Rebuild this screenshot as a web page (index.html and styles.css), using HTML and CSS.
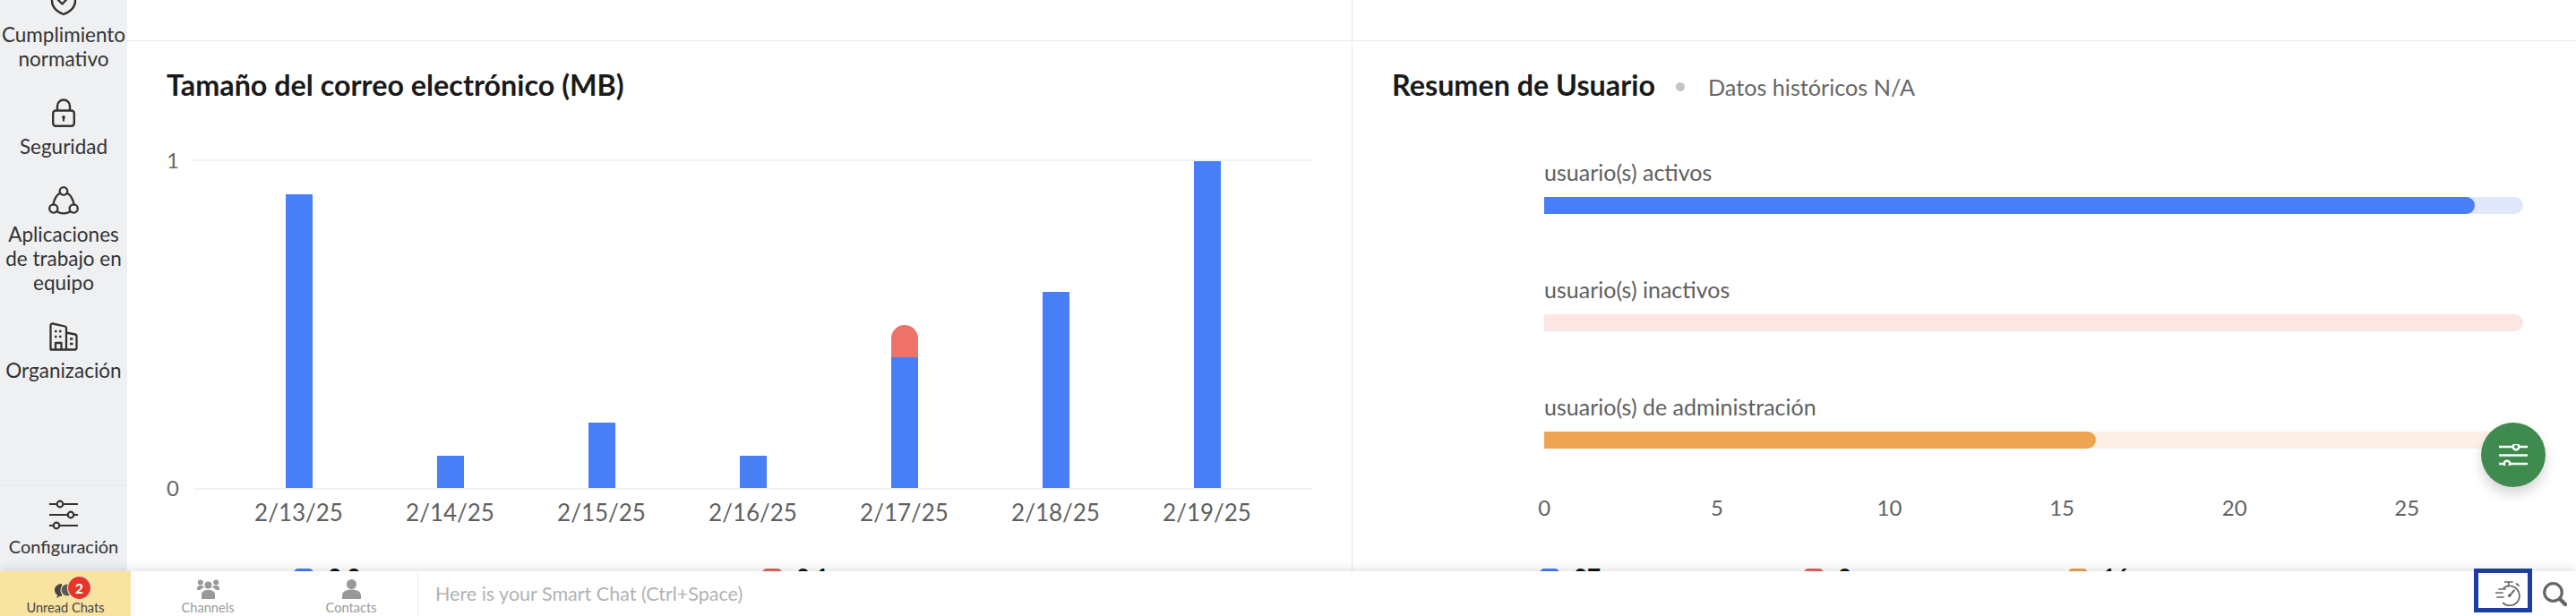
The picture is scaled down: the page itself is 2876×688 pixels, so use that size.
FILE: index.html
```html
<!DOCTYPE html>
<html lang="es">
<head>
<meta charset="utf-8">
<title>Resumen</title>
<link rel="stylesheet" href="styles.css">
</head>
<body>
<div class="app">
  <div class="main">
    <aside class="sidebar">
      <nav class="nav">
        <a class="nav-item">
          <svg class="nav-icon" viewBox="0 0 32 32" fill="none" stroke="#333" stroke-width="2.4" stroke-linecap="round" stroke-linejoin="round"><path d="M16 1.5 29 5.5V16c0 7-5.500 12-13 15C8.500 28 3 23 3 16V5.500Z"/><path d="m10 15 4.500 4.500L22 11.500"/></svg>
          <span>Cumplimiento normativo</span>
        </a>
        <a class="nav-item">
          <svg class="nav-icon" viewBox="0 0 32 32" fill="none" stroke="#333" stroke-width="2.4" stroke-linejoin="round"><rect x="4.200" y="13.500" width="23.600" height="17.300" rx="3"/><path d="M9 13.500V8.500a7 7 0 0 1 14 0v5"/><circle cx="16" cy="21" r="1.900" fill="#333" stroke="none"/><path d="M16 21v4.500" stroke-width="2"/></svg>
          <span>Seguridad</span>
        </a>
        <a class="nav-item">
          <svg class="nav-icon nav-icon-wide" viewBox="0 0 34 32" fill="none" stroke="#333" stroke-width="2.300" stroke-linecap="round"><circle cx="17" cy="5.500" r="4.300"/><circle cx="5.800" cy="25" r="4.600"/><circle cx="28.200" cy="25" r="4.600"/><path d="M13.200 7.500C9 10 6.500 14.500 5.500 20.300M20.800 7.500C25 10 27.500 14.500 28.500 20.300M10 28.500c4 2.500 10 2.500 14 0"/></svg>
          <span>Aplicaciones de trabajo en equipo</span>
        </a>
        <a class="nav-item">
          <svg class="nav-icon" viewBox="0 0 32 32" fill="none" stroke="#333" stroke-width="2.300" stroke-linejoin="round"><path d="M1.500 30.500V3.500c0-1.500 1-2.300 2.500-2L17.500 4.500c1 .2 1.500 1 1.500 2v24zM19 11.500l10 2c1 .2 1.500 1 1.500 2v13c0 1.200-.8 2-2 2H3.500c-1.200 0-2-.8-2-2"/><path d="M7 30.500v-7.500h6.500v7.500"/><path d="M6 10h2.500M11 10h2.500M6 16h2.500M11 16h2.500M23 18.500h3.500M23 24h3.500" stroke-width="2.400"/></svg>
          <span>Organización</span>
        </a>
      </nav>
      <a class="nav-footer">
        <svg class="nav-icon" viewBox="0 0 32 32" fill="none" stroke="#333" stroke-width="2.200"><path d="M0 4h8.500M15.500 4H32M0 16h20.500M27.500 16H32M0 28h4.500M11.500 28H32"/><circle cx="12" cy="4" r="3.300"/><circle cx="24" cy="16" r="3.300"/><circle cx="8" cy="28" r="3.300"/></svg>
        <span>Configuración</span>
      </a>
    </aside>

    <div class="content">
      <section class="panel panel-left">
        <div class="panel-top"></div>
        <div class="panel-body">
          <h2 class="panel-title">Tamaño del correo electrónico (MB)</h2>
          <div class="chart">
            <div class="y-axis"><span>1</span><span>0</span></div>
            <div class="plot-wrap">
              <div class="plot">
                <div class="col"><div class="bar bar-blue" style="height:90%"></div></div>
                <div class="col"><div class="bar bar-blue" style="height:10%"></div></div>
                <div class="col"><div class="bar bar-blue" style="height:20%"></div></div>
                <div class="col"><div class="bar bar-blue" style="height:10%"></div></div>
                <div class="col"><div class="bar bar-red" style="height:10%"></div><div class="bar bar-blue" style="height:40%"></div></div>
                <div class="col"><div class="bar bar-blue" style="height:60%"></div></div>
                <div class="col"><div class="bar bar-blue" style="height:100%"></div></div>
              </div>
              <div class="x-axis">
                <span>2/13/25</span><span>2/14/25</span><span>2/15/25</span><span>2/16/25</span><span>2/17/25</span><span>2/18/25</span><span>2/19/25</span>
              </div>
            </div>
          </div>
          <div class="legend legend-left">
            <div class="legend-item"><i class="swatch swatch-blue"></i><b>3.3</b></div>
            <div class="legend-item"><i class="swatch swatch-red"></i><b>0.1</b></div>
          </div>
        </div>
      </section>

      <section class="panel panel-right">
        <div class="panel-top"></div>
        <div class="panel-body">
          <div class="title-row">
            <h2 class="panel-title">Resumen de Usuario</h2>
            <i class="title-dot"></i>
            <span class="title-note">Datos históricos N/A</span>
          </div>
          <div class="hbars">
            <div class="hbar-row">
              <div class="hbar-label">usuario(s) activos</div>
              <div class="track track-blue"><div class="fill fill-blue" style="width:95.100%"></div></div>
            </div>
            <div class="hbar-row">
              <div class="hbar-label">usuario(s) inactivos</div>
              <div class="track track-red"></div>
            </div>
            <div class="hbar-row">
              <div class="hbar-label">usuario(s) de administración</div>
              <div class="track track-orange"><div class="fill fill-orange" style="width:56.400%"></div></div>
            </div>
            <div class="h-axis"><span>0</span><span>5</span><span>10</span><span>15</span><span>20</span><span>25</span></div>
          </div>
          <div class="legend legend-right">
            <div class="legend-item"><i class="swatch swatch-blue"></i><b>27</b></div>
            <div class="legend-item"><i class="swatch swatch-red"></i><b>0</b></div>
            <div class="legend-item"><i class="swatch swatch-orange"></i><b>16</b></div>
          </div>
        </div>
      </section>
    </div>

    <button class="fab" type="button" aria-label="Filtros">
      <svg viewBox="0 0 32 24" width="32" height="24" fill="none" stroke="#fff" stroke-width="2.400"><path d="M0 3h15M23 3h9M0 12.500h32M0 22h5M13 22h19"/><circle cx="19" cy="3" r="3.300"/><circle cx="9" cy="22" r="3.300"/></svg>
    </button>
  </div>

  <footer class="bottombar">
    <a class="tab tab-active">
      <span class="tab-icon">
        <svg viewBox="0 0 22 18" width="22" height="18" fill="#444"><path d="M9 1C4.500 1 1 4.200 1 8c0 2.500 1.300 4.500 3.300 5.800L3 17l4-2.300c.7.200 1.300.3 2 .3z"/><path d="M15 1c-4.200 0-7 3.200-7 7s2.800 7 7 7 6-3 6-7-1.800-7-6-7z" fill="#5a5a5a" stroke="#f9e3a1" stroke-width="1.200"/></svg>
        <em class="badge">2</em>
      </span>
      <span>Unread Chats</span>
    </a>
    <a class="tab tab-channels">
      <span class="tab-icon">
        <svg viewBox="0 0 25 22" width="25" height="22" fill="#999"><circle cx="12.500" cy="6.500" r="4"/><circle cx="3.800" cy="3.400" r="3"/><circle cx="21.200" cy="3.400" r="3"/><path d="M5 22v-5c0-3 2.500-5 7.500-5s7.500 2 7.500 5v5z"/><path d="M0 10c0-2 1.500-3 3.800-3S7 7.500 8 9c-2 .8-3.800 1.800-4.500 3H0zM25 10c0-2-1.500-3-3.800-3S18 7.500 17 9c2 .8 3.800 1.800 4.500 3H25z"/></svg>
      </span>
      <span>Channels</span>
    </a>
    <a class="tab tab-contacts">
      <span class="tab-icon">
        <svg viewBox="0 0 21 22" width="21" height="22" fill="#999"><circle cx="10.500" cy="5.500" r="5.500"/><path d="M0 22v-3.500C0 14 4 11.500 10.500 11.500S21 14 21 18.500V22c-3 .2-18 .2-21 0z"/></svg>
      </span>
      <span>Contacts</span>
    </a>
    <div class="smart-chat">Here is your Smart Chat (Ctrl+Space)</div>
    <button class="tool tool-timer" type="button" aria-label="Temporizador">
      <svg viewBox="0 0 28 28" width="28" height="28" fill="none" stroke="#666" stroke-width="1.700" stroke-linecap="round"><path d="M10.500 1h8.500M14.700 1v4"/><path d="m23.500 3 2.500 2"/><path d="M9.500 7.500A11 11 0 1 1 8.500 24.500"/><path d="M4 9h7M0 13h8M2 18h7"/><path d="m15.700 16.300 5.300-6" stroke-width="2"/><circle cx="15.700" cy="16.300" r="1.800" fill="#666" stroke="none"/></svg>
    </button>
    <button class="tool tool-search" type="button" aria-label="Buscar">
      <svg viewBox="0 0 27 27" width="27" height="27" fill="none" stroke="#666"><circle cx="11.500" cy="11.500" r="9.800" stroke-width="3.200"/><path d="m20 20 5 5" stroke-width="4.500" stroke-linecap="round"/></svg>
    </button>
  </footer>
</div>
</body>
</html>
```
FILE: styles.css
```css
*, *::before, *::after { box-sizing: border-box; }
html, body { margin: 0; padding: 0; height: 100%; background: #fff; }
body { font-family: "Lato", "Liberation Sans", sans-serif; color: #333; overflow: hidden; }
.app { width: 2876px; height: 688px; display: flex; flex-direction: column; overflow: hidden; }
.main { position: relative; height: 638px; display: flex; overflow: hidden; }

.sidebar { width: 142px; flex: none; background: #eff0f2; display: flex; flex-direction: column; overflow: hidden; }
.nav { margin-top: -15px; display: flex; flex-direction: column; gap: 31.500px; }
.nav-item, .nav-footer { display: flex; flex-direction: column; align-items: center; text-align: center; font-size: 22.500px; line-height: 27px; color: #333; }
.nav-icon { width: 32px; height: 32px; flex: none; margin-bottom: 7.500px; overflow: visible; }
.nav-icon-wide { width: 34px; }
.nav-footer { margin-top: auto; border-top: 1px solid #e8e9eb; padding-top: 16px; height: 96px; font-size: 20px; }
.nav-footer .nav-icon { margin-bottom: 5.500px; }

.content { flex: 1; display: grid; grid-template-columns: 1368px 1fr; min-width: 0; }
.panel { min-width: 0; }
.panel-left { border-right: 1px solid #e8e8e8; }
.panel-top { height: 46px; border-bottom: 1px solid #e8e8e8; }
.panel-body { padding: 29px 0 0 44px; }
.panel-title { margin: 0; font-size: 32.300px; line-height: 40px; font-weight: 700; color: #1a1a1a; }

.chart { display: flex; margin-top: 63px; }
.y-axis { width: 30px; height: 390px; display: flex; flex-direction: column; justify-content: space-between; font-size: 24px; line-height: 1; color: #666; margin-top: -11px; }
.plot-wrap { width: 1249px; }
.plot { height: 369px; padding: 0 33px; display: flex; border-top: 2px solid #f2f2f2; border-bottom: 2px solid #f2f2f2; }
.col { flex: 1; display: flex; flex-direction: column; justify-content: flex-end; align-items: center; }
.bar { width: 30px; flex: none; }
.bar-blue { background: #487ef6; }
.bar-red { background: #ee7268; border-radius: 15px 15px 0 0; }
.x-axis { padding: 10px 33px 0; display: flex; font-size: 26px; line-height: 30px; color: #5f5f5f; }
.x-axis span { flex: 1; text-align: center; }

.legend { display: flex; }
.legend-item { display: flex; align-items: flex-start; }
.legend-item b { font-size: 26px; line-height: 26px; color: #111; margin: -4px 0 0 16px; }
.swatch { width: 22px; height: 22px; border-radius: 5px; display: block; }
.swatch-blue { background: #487ef6; }
.swatch-red { background: #e2685f; }
.swatch-orange { background: #e8a34f; }
.legend-left { margin-top: 48px; margin-left: 142px; }
.legend-left .legend-item { width: 523px; }
.legend-right { margin-top: 53px; margin-left: 165px; }
.legend-right .legend-item { width: 295px; }

.title-row { display: flex; align-items: center; height: 40px; }
.title-dot { width: 10px; height: 10px; border-radius: 50%; background: #c4c4c4; margin-left: 23px; margin-top: 3px; }
.title-note { font-size: 25.200px; line-height: 40px; color: #666; margin-left: 26px; padding-top: 3px; }

.hbars { margin-top: 61.500px; margin-left: 170px; width: 1093px; }
.hbar-row + .hbar-row { margin-top: 68.500px; }
.hbar-label { font-size: 25px; line-height: 30px; color: #5f5f5f; margin-bottom: 13.500px; }
.track { height: 19px; border-radius: 0 10px 10px 0; }
.track-blue { background: #e0e9fc; }
.track-red { background: #fce6e4; }
.track-orange { background: #fdf1e6; }
.fill { height: 100%; border-radius: 0 10px 10px 0; }
.fill-blue { background: #487ef6; }
.fill-orange { background: #eea552; }
.h-axis { display: flex; margin: 51px 0 0 -96px; font-size: 24px; line-height: 30px; color: #5f5f5f; }
.h-axis span { width: 192.600px; flex: none; text-align: center; }

.fab { position: absolute; left: 2770px; top: 472px; width: 72px; height: 72px; border: 0; padding: 0; border-radius: 50%; background: #3f8a4f; box-shadow: 0 8px 14px rgba(0,0,0,.16); display: flex; align-items: center; justify-content: center; }

.bottombar { position: relative; z-index: 2; height: 50px; flex: none; display: flex; align-items: stretch; background: #fff; box-shadow: 0 -4px 8px rgba(0,0,0,.09); }
.tab { flex: none; display: flex; flex-direction: column; align-items: center; font-size: 14.600px; line-height: 18px; color: #999; padding-top: 9px; }
.tab-active { width: 146px; background: #f9e3a1; color: #444; }
.tab-channels { width: 172px; }
.tab-contacts { width: 149px; border-right: 1px solid #ececec; }
.tab-icon { position: relative; height: 22px; margin-bottom: 1px; display: block; }
.tab-active .tab-icon { width: 26px; }
.tab-active .tab-icon svg { position: absolute; left: 0; top: 4px; }
.badge { position: absolute; left: 16px; top: -3px; width: 25px; height: 25px; border-radius: 50%; background: #e8352a; color: #fff; font-style: normal; font-weight: 700; font-size: 16px; line-height: 25px; text-align: center; box-shadow: 0 0 0 1px #fbeed0; }
.smart-chat { flex: 1; padding-left: 19px; font-size: 21.500px; line-height: 50px; color: #b2b2b2; }
.tool { flex: none; border: 0; padding: 0; background: none; align-self: center; display: block; height: 28px; }
.tool svg { display: block; }
.tool-timer { width: 28px; position: relative; margin-right: 25px; }
.tool-timer::after { content: ""; position: absolute; left: -24px; top: -14px; width: 65px; height: 49px; border: 5px solid #1a3fa0; }
.tool-search { width: 27px; margin-right: 10px; }
```
